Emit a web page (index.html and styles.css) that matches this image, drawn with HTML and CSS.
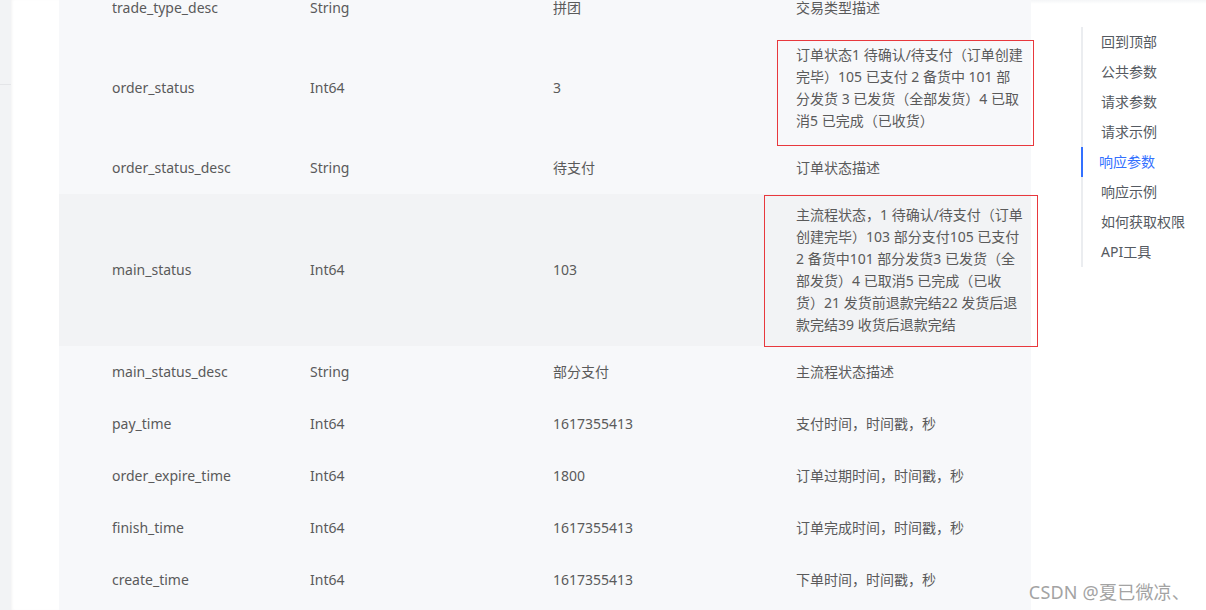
FILE: index.html
```html
<!DOCTYPE html>
<html lang="zh-CN">
<head>
<meta charset="utf-8">
<title>响应参数</title>
<link rel="stylesheet" href="styles.css">
</head>
<body>
<div class="page">
  <div class="strip">
    <div class="strip-top"></div>
  </div>
  <div class="content">
    <div class="params">
      <div class="row">
        <div class="c name">trade_type_desc</div>
        <div class="c type">String</div>
        <div class="c ex">拼团</div>
        <div class="c desc">交易类型描述</div>
      </div>
      <div class="row">
        <div class="c name">order_status</div>
        <div class="c type">Int64</div>
        <div class="c ex">3</div>
        <div class="c desc"><div class="note note-a">订单状态1 待确认/待支付（订单创建<br>完毕）105 已支付 2 备货中 101 部<br>分发货 3 已发货（全部发货）4 已取<br>消5 已完成（已收货）</div></div>
      </div>
      <div class="row">
        <div class="c name">order_status_desc</div>
        <div class="c type">String</div>
        <div class="c ex">待支付</div>
        <div class="c desc">订单状态描述</div>
      </div>
      <div class="row row-hover">
        <div class="c name">main_status</div>
        <div class="c type">Int64</div>
        <div class="c ex">103</div>
        <div class="c desc"><div class="note note-b">主流程状态，1 待确认/待支付（订单<br>创建完毕）103 部分支付105 已支付<br>2 备货中101 部分发货3 已发货（全<br>部发货）4 已取消5 已完成（已收<br>货）21 发货前退款完结22 发货后退<br>款完结39 收货后退款完结</div></div>
      </div>
      <div class="row">
        <div class="c name">main_status_desc</div>
        <div class="c type">String</div>
        <div class="c ex">部分支付</div>
        <div class="c desc">主流程状态描述</div>
      </div>
      <div class="row">
        <div class="c name">pay_time</div>
        <div class="c type">Int64</div>
        <div class="c ex">1617355413</div>
        <div class="c desc">支付时间，时间戳，秒</div>
      </div>
      <div class="row">
        <div class="c name">order_expire_time</div>
        <div class="c type">Int64</div>
        <div class="c ex">1800</div>
        <div class="c desc">订单过期时间，时间戳，秒</div>
      </div>
      <div class="row">
        <div class="c name">finish_time</div>
        <div class="c type">Int64</div>
        <div class="c ex">1617355413</div>
        <div class="c desc">订单完成时间，时间戳，秒</div>
      </div>
      <div class="row">
        <div class="c name">create_time</div>
        <div class="c type">Int64</div>
        <div class="c ex">1617355413</div>
        <div class="c desc">下单时间，时间戳，秒</div>
      </div>
    </div>
    <div class="toc-col">
      <ul class="toc">
        <li>回到顶部</li>
        <li>公共参数</li>
        <li>请求参数</li>
        <li>请求示例</li>
        <li class="active">响应参数</li>
        <li>响应示例</li>
        <li>如何获取权限</li>
        <li>API工具</li>
      </ul>
    </div>
  </div>
  <div class="watermark">CSDN @夏已微凉、</div>
</div>
</body>
</html>
```
FILE: styles.css
```css
html, body {
  margin: 0;
  padding: 0;
  height: 100%;
  overflow: hidden;
  background: #ffffff;
}
body {
  font-family: "Noto Sans", "Noto Sans CJK SC", sans-serif;
  font-size: 14px;
  color: #5a5a5a;
}
.page {
  position: relative;
  display: flex;
  height: 610px;
}
.strip {
  width: 11px;
  flex: none;
  background: #f2f3f5;
}
.strip-top {
  height: 84px;
  border-bottom: 1px solid #e4e5e8;
}
.content {
  flex: 1;
  display: flex;
  background: #ffffff;
  box-shadow: inset 2px 0 3px -1px rgba(0, 0, 0, 0.05);
}
.params {
  margin-left: 48px;
  width: 972px;
  flex: none;
  margin-top: -18px;
  background: #f7f8fa;
  padding-left: 53px;
  box-sizing: border-box;
  height: 640px;
}
.row {
  display: grid;
  grid-template-columns: 198px 243px 243px 235px;
  align-items: center;
  min-height: 52px;
  padding: 10px 0;
  box-sizing: border-box;
  line-height: 22px;
  margin-left: -53px;
  padding-left: 53px;
}
.row-hover {
  background: #f2f3f5;
}
.c {
  min-width: 0;
}
.desc {
  position: relative;
}
.note {
  position: relative;
  white-space: nowrap;
}
.note::after {
  content: "";
  position: absolute;
  border: 1px solid #e8383d;
}
.note-a::after {
  left: -19px;
  top: -4px;
  width: 255px;
  height: 104px;
}
.note-b::after {
  left: -32px;
  top: -9px;
  width: 272px;
  height: 150px;
}
.toc-col {
  flex: 1;
  background: linear-gradient(#f4f5f7, #ffffff 4px);
}
.toc {
  list-style: none;
  margin: 27px 0 0 50px;
  padding: 0;
  border-left: 2px solid #ebedf0;
  width: 120px;
}
.toc li {
  line-height: 30px;
  height: 30px;
  padding-left: 18px;
  color: #555a61;
  margin-left: -2px;
  border-left: 2px solid transparent;
}
.toc li.active {
  color: #3370ff;
  border-left-color: #3370ff;
  padding-left: 16px;
}
.watermark {
  position: absolute;
  right: 16px;
  bottom: 6px;
  font-size: 18px;
  color: #a3a3a3;
  text-shadow: 0 0 2px #ffffff;
  letter-spacing: 0.2px;
}
```
